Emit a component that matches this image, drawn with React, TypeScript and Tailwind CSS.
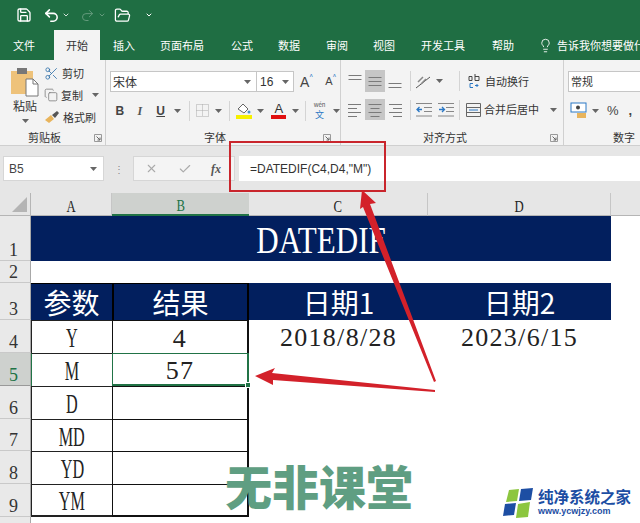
import { ChevronDown, FolderOpen, Lightbulb, Redo2, Save, Scissors, Undo2, Copy, Check, X } from "lucide-react";

const CJK = "font-['Noto_Sans_CJK_SC','Liberation_Sans',sans-serif]";
const SERIF = "font-['Liberation_Serif','Noto_Sans_CJK_SC',serif]";

function Caret({ className = "" }: { className?: string }) {
    return (
        <svg width="7" height="4" viewBox="0 0 7 4" className={`shrink-0 ${className}`}>
            <path d="M0 0h7L3.5 4z" fill="#666" />
        </svg>
    );
}

function Sep({ className = "" }: { className?: string }) {
    return <div className={`w-px h-[20px] bg-[#d4d4d4] shrink-0 ${className}`} />;
}

function Launcher() {
    return (
        <svg width="8" height="8" viewBox="0 0 8 8" className="shrink-0">
            <path d="M.5.5h7v7h-7z" fill="none" stroke="#999" />
            <path d="M2.5 2.5l3.5 3.5M6 3.5V6H3.5" fill="none" stroke="#666" />
        </svg>
    );
}

function Lines({ rows, anchor, y }: { rows: number[]; anchor: "l" | "c" | "r"; y: number }) {
    return (
        <svg width="16" height="18" viewBox="0 0 16 18">
            {rows.map((w, i) => {
                const x = anchor === "l" ? 1 : anchor === "r" ? 15 - w : (16 - w) / 2;
                return <rect key={i} x={x} y={y + i * 4} width={w} height="1" fill="#7a7a7a" />;
            })}
        </svg>
    );
}

function Indent({ flip }: { flip?: boolean }) {
    return (
        <svg width="16" height="14" viewBox="0 0 16 14">
            <path d="M0 .5h16M8 4.5h8M8 8.5h8M0 13h16" stroke="#888" fill="none" />
            <path d={flip ? "M1 6.5h5M4 4l2.500 2.500L4 9" : "M6 6.500H1M3.500 4L1 6.500 3.500 9"} stroke="#2b78c5" strokeWidth="1.300" fill="none" />
        </svg>
    );
}

function PasteIcon() {
    return (
        <svg width="28" height="30" viewBox="0 0 28 30">
            <rect x="0" y="4" width="22" height="23" fill="#eec27a" />
            <rect x="6" y="1" width="10" height="6" fill="#777" />
            <path d="M15 12h7l5 5v12H15z" fill="#fff" stroke="#777" />
            <path d="M22 12v5h5" fill="none" stroke="#777" />
        </svg>
    );
}

function BrushIcon() {
    return (
        <svg width="16" height="14" viewBox="0 0 16 14">
            <path d="M1 10l6-5 3 4-5 4z" fill="#e8b45c" />
            <path d="M8 5l5-4 2 2-4 5z" fill="#555" />
        </svg>
    );
}

function WrapIcon() {
    return (
        <svg width="12" height="17" viewBox="0 0 12 17">
            <path d="M1 3.500h3v4H1zM7 1v6.500h4v-4H7" fill="none" stroke="#444" />
            <path d="M5 10.500H2v4h3M7 12.500h3l-1.500-1.500M10 12.500l-1.500 1.500" fill="none" stroke="#2b78c5" />
        </svg>
    );
}

function RibbonText({ children, className = "" }: { children: React.ReactNode; className?: string }) {
    return <span className={`text-[11px] leading-none text-[#333] whitespace-nowrap ${className}`}>{children}</span>;
}

function ClipboardGroup() {
    return (
        <div className="w-[106px] shrink-0 border-r border-[#d0d0d0] flex flex-col">
            <div className="h-[70px] flex">
                <div className="w-[36px] ml-[7px] flex flex-col items-center pt-[7px]">
                    <PasteIcon />
                    <RibbonText className="text-[12px] mt-[3px]">粘贴</RibbonText>
                    <Caret className="mt-[7px]" />
                </div>
                <div className="flex flex-col pt-[5px] gap-[6px] ml-[1px]">
                    <div className="flex items-center h-[16px] gap-[3px]">
                        <Scissors size={15} color="#2f6fa8" strokeWidth={1.3} />
                        <RibbonText>剪切</RibbonText>
                    </div>
                    <div className="flex items-center h-[16px] gap-[3px]">
                        <Copy size={14} color="#777" strokeWidth={1.300} />
                        <RibbonText>复制</RibbonText>
                        <Caret className="ml-[6px]" />
                    </div>
                    <div className="flex items-center h-[16px] gap-[3px]">
                        <BrushIcon />
                        <RibbonText>格式刷</RibbonText>
                    </div>
                </div>
            </div>
            <div className="h-[15px] flex items-center">
                <RibbonText className="ml-[28px]">剪贴板</RibbonText>
                <div className="ml-[33px]">
                    <Launcher />
                </div>
            </div>
        </div>
    );
}

function FontGroup() {
    return (
        <div className="w-[235px] shrink-0 border-r border-[#d0d0d0] flex flex-col pl-[4px]">
            <div className="h-[70px] flex flex-col pt-[11px]">
                <div className="flex items-center h-[21px]">
                    <div className="w-[147px] h-full bg-white border border-[#c6c6c6] flex items-center justify-between pl-[2px] pr-[5px]">
                        <RibbonText className="text-[12px]">宋体</RibbonText>
                        <Caret />
                    </div>
                    <div className="w-[37px] h-full bg-white border border-l-0 border-[#c6c6c6] flex items-center justify-between pl-[3px] pr-[4px]">
                        <RibbonText className="text-[12px] font-['Liberation_Sans',sans-serif]">16</RibbonText>
                        <Caret />
                    </div>
                    <span className="ml-[6px] text-[14px] leading-none text-[#444] font-['Liberation_Sans',sans-serif]">A</span>
                    <span className="text-[7px] mb-[10px] text-[#2b78c5]">^</span>
                    <span className="ml-[12px] text-[11px] leading-none text-[#444] font-['Liberation_Sans',sans-serif]">A</span>
                    <span className="text-[7px] mb-[10px] text-[#2b78c5]">^</span>
                </div>
                <div className="flex items-center h-[21px] mt-[8px]">
                    <span className="w-[20px] text-center text-[12px] font-bold text-[#444] font-['Liberation_Sans',sans-serif]">B</span>
                    <span className="w-[20px] text-center text-[12px] italic font-bold text-[#555] font-['Liberation_Serif',serif]">I</span>
                    <span className="w-[22px] text-center text-[12px] font-bold underline text-[#444] font-['Liberation_Sans',sans-serif]">U</span>
                    <Caret className="ml-[2px]" />
                    <Sep className="ml-[8px]" />
                    <div className="w-[26px] flex justify-center">
                        <svg width="13" height="13" viewBox="0 0 13 13">
                            <path d="M.5.5h12v12H.500zM6.500.5v12M.5 6.500h12" fill="none" stroke="#aaa" strokeDasharray="1 1" />
                        </svg>
                    </div>
                    <Caret />
                    <Sep className="ml-[7px]" />
                    <div className="w-[27px] flex flex-col items-center">
                        <svg width="15" height="12" viewBox="0 0 15 12">
                            <path d="M2 6l5-5 5 5-4 4z" fill="#fff" stroke="#666" />
                            <circle cx="13" cy="9" r="1.500" fill="#4a90c8" />
                        </svg>
                        <div className="w-[16px] h-[4px] bg-[#f6f000]" />
                    </div>
                    <Caret />
                    <div className="w-[27px] ml-[1px] flex flex-col items-center">
                        <span className="text-[13px] leading-[12px] text-[#333] font-['Liberation_Sans',sans-serif]">A</span>
                        <div className="w-[15px] h-[4px] bg-[#e01010]" />
                    </div>
                    <Caret />
                    <Sep className="ml-[6px]" />
                    <div className="w-[27px] flex flex-col items-center gap-[2px]">
                        <span className="text-[6px] leading-[6px] text-[#555]">wén</span>
                        <span className="text-[9px] leading-[9px] text-[#2b78c5]">文</span>
                    </div>
                    <Caret />
                </div>
            </div>
            <div className="h-[15px] flex items-center">
                <RibbonText className="ml-[94px]">字体</RibbonText>
                <div className="ml-[97px]">
                    <Launcher />
                </div>
            </div>
        </div>
    );
}

function AlignGroup() {
    return (
        <div className="w-[223px] shrink-0 border-r border-[#d0d0d0] flex flex-col pl-[4px]">
            <div className="h-[70px] flex flex-col pt-[10px]">
                <div className="flex items-center h-[22px]">
                    <div className="w-[20px] h-full flex justify-center items-center">
                        <Lines rows={[13, 13]} anchor="c" y={3} />
                    </div>
                    <div className="w-[20px] h-full bg-[#c6c6c6] flex justify-center items-center">
                        <Lines rows={[13, 13, 13]} anchor="c" y={5} />
                    </div>
                    <div className="w-[20px] h-full flex justify-center items-center">
                        <Lines rows={[13, 13]} anchor="c" y={11} />
                    </div>
                    <Sep className="ml-[5px]" />
                    <div className="w-[36px] flex items-center justify-center gap-[4px]">
                        <svg width="17" height="15" viewBox="0 0 17 15">
                            <path d="M1 14L15 3" stroke="#555" fill="none" />
                            <path d="M3 8l5-5M6 10l5-5" stroke="#888" strokeWidth="1.500" fill="none" />
                        </svg>
                        <Caret />
                    </div>
                    <Sep className="ml-[12px]" />
                    <div className="ml-[8px] flex items-center gap-[5px]">
                        <WrapIcon />
                        <RibbonText>自动换行</RibbonText>
                    </div>
                </div>
                <div className="flex items-center h-[21px] mt-[7px]">
                    <div className="w-[20px] h-full flex justify-center items-center">
                        <Lines rows={[13, 9, 13, 9]} anchor="l" y={3} />
                    </div>
                    <div className="w-[20px] h-full bg-[#c6c6c6] flex justify-center items-center">
                        <Lines rows={[13, 9, 13, 9]} anchor="c" y={3} />
                    </div>
                    <div className="w-[20px] h-full flex justify-center items-center">
                        <Lines rows={[13, 9, 13, 9]} anchor="r" y={3} />
                    </div>
                    <Sep className="ml-[5px]" />
                    <div className="w-[48px] flex items-center justify-between px-[5px]">
                        <Indent />
                        <Indent flip />
                    </div>
                    <Sep />
                    <div className="ml-[6px] flex items-center gap-[3px]">
                        <svg width="15" height="14" viewBox="0 0 15 14">
                            <path d="M.5.5h14v13H.5zM.5 4.500h14M.5 9.500h14" fill="none" stroke="#666" />
                            <path d="M3 7h9" stroke="#2b78c5" />
                        </svg>
                        <RibbonText>合并后居中</RibbonText>
                        <Caret className="ml-[8px]" />
                    </div>
                </div>
            </div>
            <div className="h-[15px] flex items-center">
                <RibbonText className="ml-[78px]">对齐方式</RibbonText>
                <div className="ml-[83px]">
                    <Launcher />
                </div>
            </div>
        </div>
    );
}

function NumberGroup() {
    return (
        <div className="flex-1 flex flex-col pl-[4px] overflow-hidden">
            <div className="h-[70px] flex flex-col pt-[11px]">
                <div className="h-[21px] w-[90px] bg-white border border-[#c6c6c6] flex items-center pl-[2px]">
                    <RibbonText>常规</RibbonText>
                </div>
                <div className="flex items-center h-[21px] mt-[8px]">
                    <svg width="17" height="17" viewBox="0 0 17 17" className="ml-[2px]">
                        <rect x="1" y="1" width="15" height="9" fill="#fff" stroke="#2b78c5" />
                        <circle cx="8" cy="5.500" r="2" fill="#444" />
                        <rect x="7" y="11" width="9" height="5" fill="#e8b45c" />
                    </svg>
                    <Caret className="ml-[5px]" />
                    <span className="ml-[8px] text-[13px] leading-none text-[#444] font-['Liberation_Sans',sans-serif]">%</span>
                    <span className="ml-[10px] text-[13px] font-bold leading-none text-[#444] font-['Liberation_Sans',sans-serif]">,</span>
                </div>
            </div>
            <div className="h-[15px] flex items-center">
                <RibbonText className="ml-[45px]">数字</RibbonText>
            </div>
        </div>
    );
}

function TopBars() {
    return (
        <div className="bg-[#1f6e43] h-[60px] flex flex-col text-white">
            <div className="h-[30px] flex items-center">
                <Save size={16} strokeWidth={2} className="ml-[16px]" />
                <Undo2 size={17} strokeWidth={2.2} className="ml-[11px]" />
                <ChevronDown size={8} strokeWidth={3} className="ml-[2px] opacity-80" />
                <Redo2 size={15} strokeWidth={1.6} className="ml-[10px] opacity-30" />
                <ChevronDown size={8} strokeWidth={3} className="ml-[3px] opacity-30" />
                <FolderOpen size={17} strokeWidth={1.8} className="ml-[8px]" />
                <ChevronDown size={8} strokeWidth={3} className="ml-[14px]" />
            </div>
            <div className={`h-[30px] flex items-center text-[11px] leading-none whitespace-nowrap overflow-hidden ${CJK}`}>
                <span className="ml-[13px] shrink-0">文件</span>
                <span className="ml-[19px] w-[46px] h-full shrink-0 bg-[#f3f3f3] text-[#333] flex items-center justify-center">开始</span>
                <span className="ml-[13px] shrink-0">插入</span>
                <span className="ml-[25px] shrink-0">页面布局</span>
                <span className="ml-[27px] shrink-0">公式</span>
                <span className="ml-[25px] shrink-0">数据</span>
                <span className="ml-[26px] shrink-0">审阅</span>
                <span className="ml-[25px] shrink-0">视图</span>
                <span className="ml-[26px] shrink-0">开发工具</span>
                <span className="ml-[27px] shrink-0">帮助</span>
                <Lightbulb size={15} strokeWidth={1.4} className="ml-[24px] shrink-0" />
                <span className="ml-[4px] shrink-0">告诉我你想要做什么</span>
            </div>
        </div>
    );
}

function FormulaBar() {
    return (
        <div className="h-[48px] bg-[#e6e6e6] border-t border-[#cfcfcf] flex items-start pt-[10px]">
            <div className="ml-[3px] w-[101px] h-[25px] bg-white border border-[#d6d6d6] flex items-center justify-between pl-[5px] pr-[6px]">
                <span className="text-[12px] text-[#444] font-['Liberation_Sans',sans-serif]">B5</span>
                <Caret />
            </div>
            <div className="w-[29px] h-[25px] flex items-center justify-center text-[#888] text-[10px]">⋮</div>
            <div className="w-[102px] h-[25px] bg-[#f4f4f4] border border-[#d6d6d6] flex items-center">
                <X size={13} color="#aaa" className="ml-[11px]" />
                <Check size={14} color="#aaa" className="ml-[20px]" />
                <span className="ml-[19px] text-[12px] italic font-bold text-[#555] font-['Liberation_Serif',serif]">fx</span>
            </div>
            <div className="ml-[4px] flex-1 h-[25px] bg-white flex items-center pl-[11px]">
                <span className="text-[12px] text-[#333] font-['Liberation_Sans',sans-serif]">=DATEDIF(C4,D4,"M")</span>
            </div>
        </div>
    );
}

function ColHead({ label, active }: { label: string; active?: boolean }) {
    return (
        <div className={`flex items-center justify-center pt-[4px] border-b ${active ? "bg-[#ced1ce] border-b-2 border-[#217346] text-[#217346]" : "bg-[#e6e6e6] border-[#b5b5b5] border-r border-r-[#c6c6c6] text-[#222]"}`}>
            <span className={`${SERIF} text-[17px] leading-none inline-block scale-x-75`}>{label}</span>
        </div>
    );
}

function RowHead({ n, active }: { n: string; active?: boolean }) {
    return (
        <div className={`flex items-end justify-center pb-[1px] pr-[3px] border-b border-r border-r-[#a8a8a8] ${active ? "bg-[#ced1ce] border-b-[#999] text-[#217346]" : "bg-[#e9e9e9] border-b-[#c9c9c9] text-[#333]"}`}>
            <span className={`${SERIF} text-[18px] leading-none`}>{n}</span>
        </div>
    );
}

function Narrow({ children }: { children: React.ReactNode }) {
    return <span className={`${SERIF} text-[27px] leading-none inline-block scale-x-[.6] text-[#222]`}>{children}</span>;
}

function Num({ children }: { children: React.ReactNode }) {
    return <span className={`${SERIF} text-[26px] leading-none tracking-[1.300px] text-[#222]`}>{children}</span>;
}

const tableRows: { n: string; key: string; value: string }[] = [
    { n: "4", key: "Y", value: "4" },
    { n: "5", key: "M", value: "57" },
    { n: "6", key: "D", value: "" },
    { n: "7", key: "MD", value: "" },
    { n: "8", key: "YD", value: "" },
    { n: "9", key: "YM", value: "" },
];

function Sheet() {
    return (
        <div className="grid flex-1 grid-cols-[31px_81px_137px_179px_183px_1fr] grid-rows-[23px_45px_22px_37px_33px_33px_33px_32px_33px_33px_1fr] bg-white">
            <div className="bg-[#e6e6e6] border-b border-r border-[#b5b5b5] flex items-end justify-end p-[3px]">
                <svg width="15" height="15" viewBox="0 0 15 15">
                    <path d="M15 0v15H0z" fill="#b4b4b4" />
                </svg>
            </div>
            <ColHead label="A" />
            <ColHead label="B" active />
            <ColHead label="C" />
            <ColHead label="D" />
            <div className="bg-[#e6e6e6] border-b border-[#b5b5b5]" />

            <RowHead n="1" />
            <div className="col-span-4 bg-[#021f5e] flex items-center justify-center pt-[3px] text-white">
                <span className={`${SERIF} text-[37px] leading-none inline-block scale-x-[.84]`}>DATEDIF</span>
            </div>
            <div />

            <RowHead n="2" />
            <div className="col-span-5" />

            <RowHead n="3" />
            <div className={`bg-[#021f5e] border-t border-black flex items-center justify-center text-white text-[28px] leading-none ${CJK}`}>参数</div>
            <div className={`bg-[#021f5e] border-t border-x-2 border-black flex items-center justify-center text-white text-[28px] leading-none ${CJK}`}>结果</div>
            <div className={`bg-[#021f5e] flex items-center justify-center text-white text-[28px] leading-none ${CJK}`}>日期1</div>
            <div className={`bg-[#021f5e] flex items-center justify-center text-white text-[28px] leading-none ${CJK}`}>日期2</div>
            <div />

            {tableRows.map((row) => {
                const sel = row.n === "5";
                return (
                    <div key={row.n} className="contents">
                        <RowHead n={row.n} active={sel} />
                        <div className={`flex items-center justify-center pt-[3px] border-t border-l border-[#222] ${row.n === "9" ? "border-b-2" : ""} ${sel ? "border-l-[#217346]" : ""}`}>
                            <Narrow>{row.key}</Narrow>
                        </div>
                        <div className={`flex items-center justify-center pt-[3px] border-t border-l border-r-2 border-[#111] ${row.n === "9" ? "border-b-2" : ""} ${sel ? "border-2 border-[#217346] relative" : ""}`}>
                            <Num>{row.value}</Num>
                            {sel && <div className="absolute -right-[4px] -bottom-[4px] w-[6px] h-[6px] bg-[#217346] border border-white" />}
                        </div>
                        <div className="flex items-center justify-center pt-[3px]">
                            {row.n === "4" && <Num>2018/8/28</Num>}
                        </div>
                        <div className="flex items-center justify-center pt-[3px]">
                            {row.n === "4" && <Num>2023/6/15</Num>}
                        </div>
                        <div />
                    </div>
                );
            })}

            <div className="bg-[#e9e9e9] border-r border-[#a8a8a8]" />
            <div className="col-span-5" />
        </div>
    );
}

function Annotations() {
    return (
        <svg width="640" height="523" viewBox="0 0 640 523" className="absolute inset-0 pointer-events-none">
            <rect x="230" y="142" width="155" height="49" fill="none" stroke="#c9252c" strokeWidth="2" />
            <path d="M362 190L376 203 370 204 436 381 434 382 363 207 360 209z" fill="#d3212a" />
            <path d="M255 376L275 368 272 373 435 390 435 392 273 380 273 385z" fill="#d3212a" />
        </svg>
    );
}

function Watermark() {
    return (
        <>
            <div className={`absolute left-[225px] top-[458px] text-[47px] leading-[54px] font-black text-[#5f9e82] whitespace-nowrap ${CJK}`}>无非课堂</div>
            <div className="absolute left-[503px] top-[488px] flex items-start">
                <svg width="31" height="31" viewBox="0 0 31 31">
                    <path d="M6 2L16 1 14 13 3 14z" fill="#8cc63f" />
                    <path d="M18 1L30 0 28 12 16 13z" fill="#1d4ea3" />
                    <path d="M2 16L13 15 11 27 0 28z" fill="#1d4ea3" />
                    <path d="M15 16L27 14 25 29 13 30z" fill="#8cc63f" />
                </svg>
                <div className="ml-[4px] flex flex-col">
                    <span className={`h-[19px] text-[15.500px] leading-[16px] font-bold text-[#1d4ea3] whitespace-nowrap ${CJK}`}>纯净系统之家</span>
                    <span className="text-[9px] leading-[9px] font-bold text-[#1d4ea3] font-['Liberation_Sans',sans-serif]">www.ycwjzy.com</span>
                </div>
            </div>
        </>
    );
}

export default function App() {
    return (
        <div className={`relative w-[640px] h-[523px] overflow-hidden flex flex-col bg-white ${CJK}`}>
            <TopBars />
            <div className="h-[85px] bg-[#f3f3f3] flex">
                <ClipboardGroup />
                <FontGroup />
                <AlignGroup />
                <NumberGroup />
            </div>
            <FormulaBar />
            <Sheet />
            <Annotations />
            <Watermark />
        </div>
    );
}
